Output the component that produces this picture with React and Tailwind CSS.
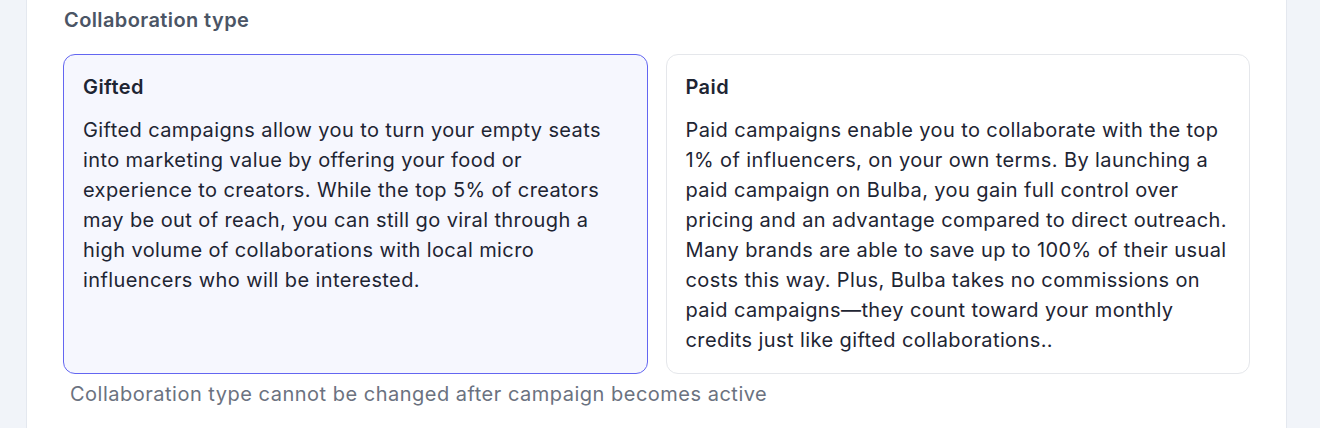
const OPTIONS = [
  {
    value: 'gifted',
    label: 'Gifted',
    text: 'Gifted campaigns allow you to turn your empty seats into marketing value by offering your food or experience to creators. While the top 5% of creators may be out of reach, you can still go viral through a high volume of collaborations with local micro influencers who will be interested.',
  },
  {
    value: 'paid',
    label: 'Paid',
    text: 'Paid campaigns enable you to collaborate with the top 1% of influencers, on your own terms. By launching a paid campaign on Bulba, you gain full control over pricing and an advantage compared to direct outreach. Many brands are able to save up to 100% of their usual costs this way. Plus, Bulba takes no commissions on paid campaigns\u2014they count toward your monthly credits just like gifted collaborations..',
  },
]

export default function App() {
  const selected = 'gifted'
  return (
    <div className="min-h-[428px] bg-[#f1f4f9] pl-[26px] pr-[33px]" style={{ fontFamily: 'Inter, "Noto Sans", sans-serif' }}>
      <div className="min-h-[428px] bg-white border-x border-[#e4e8ef] pl-[36px] pr-[36px] pt-2">
        <h3 className="text-[20px] leading-6 tracking-[0.02em] font-semibold text-[#4b5565] mb-[22px] pl-px">Collaboration type</h3>
        <div className="grid grid-cols-2 gap-[18px]">
          {OPTIONS.map(o => (
            <div key={o.value}
              className={
                o.value === selected
                  ? 'rounded-xl border border-[#6366f1] bg-[#f6f7fe] px-[19px] pt-5 pb-[18px]'
                  : 'rounded-xl border border-[#e5e7eb] bg-white px-[19px] pt-5 pb-[18px]'
              }>
              <p className="text-[20px] leading-6 tracking-[0.02em] font-semibold text-[#1e2533] mb-4">{o.label}</p>
              <p className="text-[20px] leading-[30px] tracking-[0.02em] text-[#1e2533]">{o.text}</p>
            </div>
          ))}
        </div>
        <p className="mt-2 pl-[7px] text-[20px] leading-6 tracking-[0.025em] text-[#6b7280]">Collaboration type cannot be changed after campaign becomes active</p>
      </div>
    </div>
  )
}
